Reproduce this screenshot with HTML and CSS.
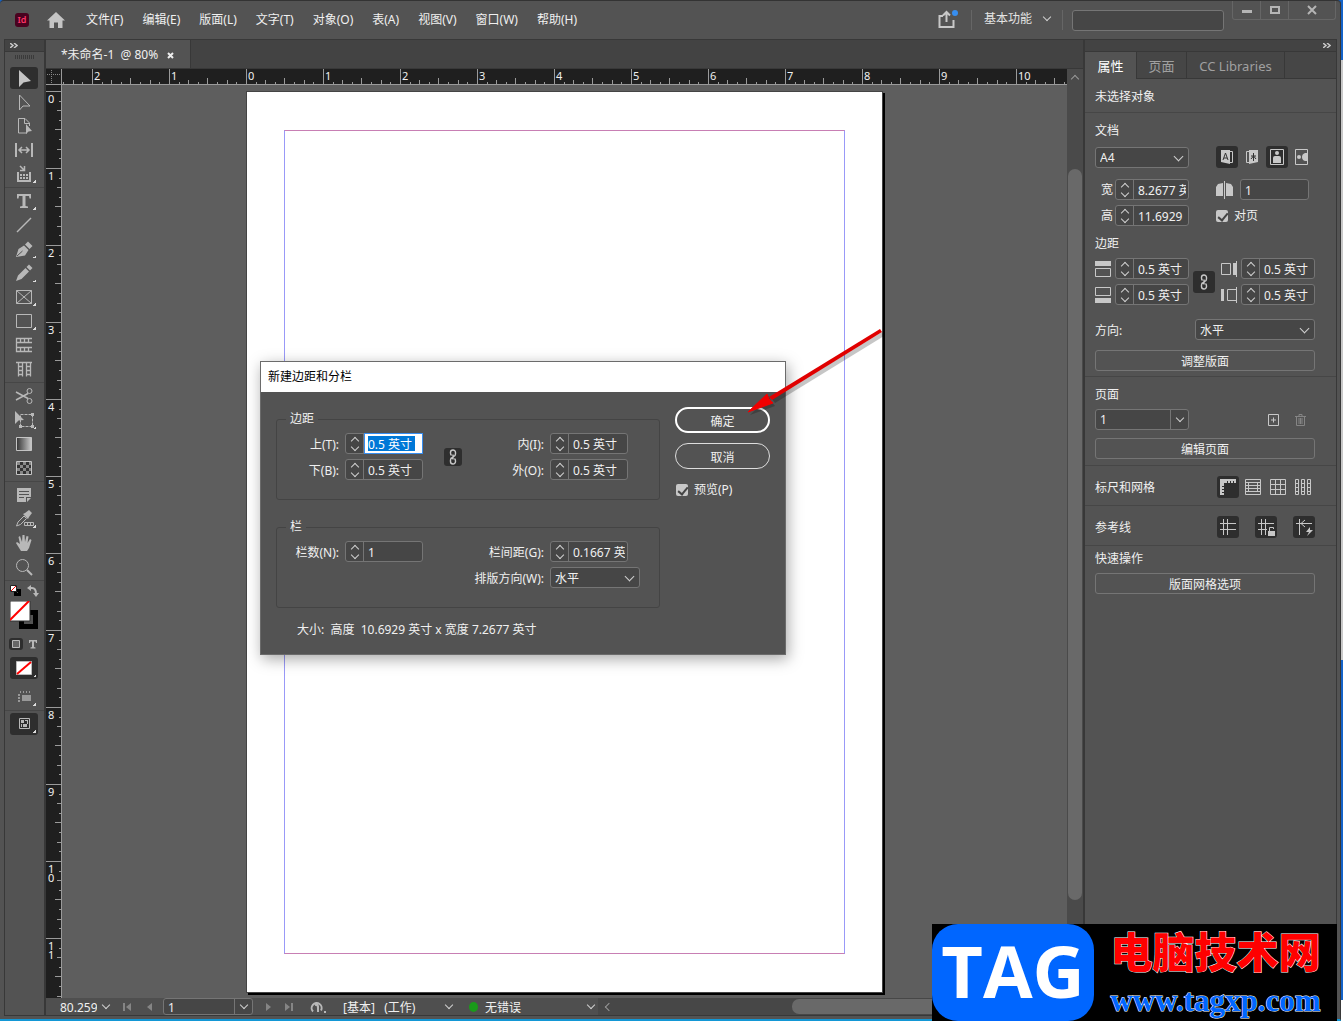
FILE: index.html
```html
<!DOCTYPE html>
<html lang="zh-CN">
<head>
<meta charset="utf-8">
<title>未命名-1</title>
<link rel="stylesheet" href="styles.css">
</head>
<body>
<div class="app">
  <header class="topbar">
    <span class="logo">Id</span>
    <button class="plain home" aria-label="主页"><svg width="18" height="16" viewBox="0 0 18 16"><path d="M9 0 18 8.500H15.500V16H11V10.500H7V16H2.500V8.500H0Z" fill="#c4c4c4"/></svg></button>
    <nav class="menu">
      <a href="#">文件(F)</a><a href="#">编辑(E)</a><a href="#">版面(L)</a><a href="#">文字(T)</a><a href="#">对象(O)</a><a href="#">表(A)</a><a href="#">视图(V)</a><a href="#">窗口(W)</a><a href="#">帮助(H)</a>
    </nav>
    <div class="top-right">
      <button class="plain" aria-label="共享"><svg width="22" height="20" viewBox="0 0 22 20"><path d="M6 6H2.500V17H16.500V10M9.500 12V3M6 5.500 9.500 2 13 5.500" fill="none" stroke="#c8c8c8" stroke-width="2"/><circle cx="18" cy="3" r="3" fill="#378ef0"/></svg></button>
      <i class="vsep"></i>
      <button class="plain workspace">基本功能<i class="chev"></i></button>
      <i class="vsep"></i>
      <input class="search" type="text" aria-label="搜索">
    </div>
    <div class="winbtns">
      <button aria-label="最小化"><svg width="10" height="10"><path d="M0 5H10V8H0z" fill="#b5b5b5"/></svg></button>
      <button aria-label="最大化"><svg width="10" height="10"><path d="M1 2H9V8H1z" fill="none" stroke="#b5b5b5" stroke-width="2"/></svg></button>
      <button class="close" aria-label="关闭"><svg width="10" height="10"><path d="M1 1 9 9M9 1 1 9" stroke="#b5b5b5" stroke-width="2"/></svg></button>
    </div>
  </header>

  <div class="workarea">
    <aside class="tools">
      <div class="strip"><svg width="8" height="5"><path d="M0 0 3 2.500 0 5M4 0 7 2.500 4 5" fill="none" stroke="#c8c8c8" stroke-width="1.500"/></svg></div>
      <div class="grip"></div>
      <button class="tool on" aria-label="选择"><svg viewBox="0 0 28 24"><path d="M9 4V21L13.500 16.500 21 15Z" fill="#c4c4c4"/></svg></button>
      <button class="tool" aria-label="直接选择"><svg viewBox="0 0 28 24"><path d="M9.500 5V20L13 16H20Z" class="ln"/></svg></button>
      <button class="tool" aria-label="页面工具"><svg viewBox="0 0 28 24"><path d="M17 19H8.500V4.500H15L19.500 9V12M14.500 4.500V9.500H19" class="ln"/><path d="M16 10V20L18.500 17.500 22 17Z" class="fl"/></svg></button>
      <button class="tool" aria-label="间隙"><svg viewBox="0 0 28 24"><path d="M6 5V19M22 5V19" class="ln" stroke-width="2"/><path d="M9 12H19M12 9 9 12 12 15M16 9 19 12 16 15" class="ln" stroke-width="1.500"/></svg></button>
      <button class="tool more" aria-label="内容收集"><svg viewBox="0 0 28 24"><path d="M8 10V19H20V10" class="ln" stroke-width="2"/><path d="M10 12h2v2h-2zM13 12h2v2h-2zM16 12h2v2h-2zM10 15h2v2h-2zM13 15h2v2h-2zM16 15h2v2h-2z" class="fl"/><path d="M10 4 14 8M14.500 4V8.500H10" class="ln" stroke-width="1.500"/></svg></button>
      <hr>
      <button class="tool more" aria-label="文字"><svg viewBox="0 0 28 24"><path d="M7 5H21V9.500H19.500L19 7H15.500V17L18 17.500V19H10V17.500L12.500 17V7H9L8.500 9.500H7Z" class="fl"/></svg></button>
      <button class="tool" aria-label="直线"><svg viewBox="0 0 28 24"><path d="M7 19 21 5" class="ln" stroke-width="1.500"/></svg></button>
      <button class="tool more" aria-label="钢笔"><svg viewBox="0 0 28 24"><path d="M6 20 8.500 12 14 8.500 18.500 13 15 18.500ZM15 7.500 18 4.500 22.500 9 19.500 12Z" class="fl"/><path d="M7 19 12.500 14" stroke="#535353"/></svg></button>
      <button class="tool more" aria-label="铅笔"><svg viewBox="0 0 28 24"><path d="M6 20 8 14.500 15.500 7 19 10.500 11.500 18ZM16.500 6 19 3.500 22.500 7 20 9.500Z" class="fl"/></svg></button>
      <button class="tool more" aria-label="矩形框架"><svg viewBox="0 0 28 24"><path d="M6.500 5.500H21.500V18.500H6.500ZM6.500 5.500 21.500 18.500M21.500 5.500 6.500 18.500" class="ln"/></svg></button>
      <button class="tool more" aria-label="矩形"><svg viewBox="0 0 28 24"><path d="M6.500 5.500H21.500V18.500H6.500Z" class="ln"/></svg></button>
      <button class="tool" aria-label="水平网格"><svg viewBox="0 0 28 24"><path d="M22 5.500H6.500V9.500H22M22 14.500H6.500V18.500H22M10.500 5V10M14.500 5V10M18.500 5V10M10.500 14V19M14.500 14V19M18.500 14V19M6.500 9V15" class="ln" stroke-width="1.300"/></svg></button>
      <button class="tool" aria-label="垂直网格"><svg viewBox="0 0 28 24"><path d="M6 5.500H22M8.500 5V19.500M12.500 5V19.500M16.500 5V19.500M20.500 5V19.500M8 9.500H12M8 13.500H12M8 17.500H12M17 9.500H21M17 13.500H21M17 17.500H21" class="ln" stroke-width="1.300"/></svg></button>
      <hr>
      <button class="tool" aria-label="剪刀"><svg viewBox="0 0 28 24"><path d="M6 8 18 14.500M6 16 18 9.500" class="ln" stroke-width="1.500"/><circle cx="19.500" cy="7" r="2.500" class="ln"/><circle cx="19.500" cy="17" r="2.500" class="ln"/></svg></button>
      <button class="tool more" aria-label="自由变换"><svg viewBox="0 0 28 24"><path d="M5 3V16L8.500 12.500 14 12Z" class="fl"/><path d="M10.500 6.500H22.500V18.500H10.500Z" class="ln" stroke-dasharray="3 1"/><path d="M9 17h3v3h-3zM21 17h3v3h-3zM21 5h3v3h-3z" class="fl"/></svg></button>
      <button class="tool" aria-label="渐变色板"><svg viewBox="0 0 28 24"><defs><linearGradient id="grad"><stop stop-color="#333"/><stop offset="1" stop-color="#ccc"/></linearGradient></defs><path d="M6.500 5.500H21.500V18.500H6.500Z" fill="url(#grad)" stroke="#c4c4c4"/></svg></button>
      <button class="tool" aria-label="渐变羽化"><svg viewBox="0 0 28 24"><path d="M6.500 5.500H21.500V18.500H6.500Z" fill="#333" stroke="#c4c4c4"/><path d="M7 6h3v3H7zM13 6h3v3h-3zM19 6h2v3h-2zM10 9h3v3h-3zM16 9h3v3h-3zM7 12h3v3H7zM13 12h3v3h-3zM19 12h2v3h-2zM10 15h3v3h-3zM16 15h3v3h-3z" fill="#888"/></svg></button>
      <hr>
      <button class="tool" aria-label="附注"><svg viewBox="0 0 28 24"><path d="M7 5H21V14H16V19H7ZM17 15H21L17 19Z" class="fl"/><path d="M9 8.500H19M9 11.500H19M9 14.500H14" stroke="#535353"/></svg></button>
      <button class="tool more" aria-label="颜色主题"><svg viewBox="0 0 28 24"><path d="M6.500 19 8 15 14 9 16.500 11.500 10.500 17.500Z" class="ln"/><path d="M13 7 15 6 19 3 22 6 19 10 18 12Z" class="fl"/><path d="M14.500 15.500H23.500V18.500H14.500ZM17.500 15V19M20.500 15V19" class="ln"/></svg></button>
      <button class="tool" aria-label="抓手"><svg viewBox="0 0 28 24"><path d="M11 20 6 12 7 11 10 13 8.500 6 10 5 12 11 12.500 4H14.500L15 11 16.500 5 18.500 5.500 17.500 12 20 8 21.500 9 19 17 17 20Z" class="fl"/></svg></button>
      <button class="tool" aria-label="缩放"><svg viewBox="0 0 28 24"><circle cx="12.500" cy="10.500" r="6" class="ln"/><path d="M17 15 22 20" class="ln" stroke-width="2"/></svg></button>
      <hr>
      <div class="pair">
        <button class="plain" aria-label="默认填色和描边"><svg width="14" height="14"><path d="M6.500 6.500H10.500V10.500H6.500Z" fill="none" stroke="#000" stroke-width="3"/><path d="M1.500 1.500H7.500V7.500H1.500Z" fill="#fff" stroke="#222"/><path d="M2 7 7 2" stroke="red"/></svg></button>
        <button class="plain" aria-label="互换填色和描边"><svg width="12" height="12"><path d="M3 3H5Q9 3 9 9" fill="none" stroke="#b8b8b8" stroke-width="2"/><path d="M0 3 4 0V6ZM6 8H12L9 12Z" class="fl"/></svg></button>
      </div>
      <button class="plain swatch" aria-label="填色"><svg width="28" height="30"><path d="M9 9H28V28H9Z" fill="#000"/><path d="M14 14H23V23H14Z" fill="#535353"/><path d="M0 0H20V20H0Z" fill="#fff" stroke="#333"/><path d="M0 19 19 0" stroke="red" stroke-width="2"/></svg></button>
      <div class="pair small">
        <button class="plain on" aria-label="格式针对容器"><svg width="14" height="12"><path d="M3.500 2.500H10.500V9.500H3.500Z" fill="#666" stroke="#b8b8b8"/></svg></button>
        <button class="plain" aria-label="格式针对文本"><svg width="10" height="12"><path d="M1 2H9V5H8L7.500 3.500H6V9L7.500 9.500V10.500H2.500V9.500L4 9V3.500H2.500L2 5H1Z" class="fl"/></svg></button>
      </div>
      <button class="tool on more" aria-label="应用无"><svg viewBox="0 0 28 24"><path d="M6.500 5.500H21.500V18.500H6.500Z" fill="#fff" stroke="#bbb"/><path d="M7 18 21 6" stroke="red" stroke-width="2"/></svg></button>
      <button class="tool more gap" aria-label="视图选项"><svg viewBox="0 0 28 24"><path d="M12 10h9v6h-9zM8 9h2v2H8zM8 12h2v2H8zM8 15h2v2H8zM10 6h1v2h-1zM13 6h1v2h-1zM16 6h1v2h-1zM19 6h1v2h-1z" fill="#999"/></svg></button>
      <hr>
      <button class="tool on more" aria-label="屏幕模式"><svg viewBox="0 0 28 24"><path d="M9.500 6.500H19.500V16.500H9.500Z" class="ln"/><path d="M11 8h3v3h-3zM15 8h3v1h-3zM17 9h1v3h-1zM13 12h4v3h-4zM11 12h1v3h-1z" class="fl"/></svg></button>
    </aside>

    <main class="doc">
      <div class="tabs"><div class="doctab"><span>*未命名-1&nbsp; @ 80%</span><button class="plain" aria-label="关闭文档"><svg width="7" height="7"><path d="M1 1 6 6M6 1 1 6" stroke="#eee" stroke-width="2"/></svg></button></div></div>
      <div class="view">
        <div class="corner"></div>
        <svg class="ruler-h">
          <defs><pattern id="th" x="30" y="0" width="77" height="16" patternUnits="userSpaceOnUse"><path d="M0.500 0V16M10.500 13V16M19.500 11V16M29.500 13V16M38.500 9V16M48.500 13V16M58.500 11V16M67.500 13V16" stroke="#9a9a9a"/></pattern></defs>
          <rect width="100%" height="100%" fill="url(#th)"/>
          <g class="num"><text x="32" y="11">2</text><text x="109" y="11">1</text><text x="186" y="11">0</text><text x="263" y="11">1</text><text x="340" y="11">2</text><text x="417" y="11">3</text><text x="494" y="11">4</text><text x="571" y="11">5</text><text x="648" y="11">6</text><text x="725" y="11">7</text><text x="802" y="11">8</text><text x="879" y="11">9</text><text x="956" y="11">10</text></g>
        </svg>
        <svg class="ruler-v">
          <defs><pattern id="tv" x="0" y="6" width="16" height="77" patternUnits="userSpaceOnUse"><path d="M0 0.500H16M13 10.500H16M11 19.500H16M13 29.500H16M9 38.500H16M13 48.500H16M11 58.500H16M13 67.500H16" stroke="#9a9a9a"/></pattern></defs>
          <rect width="100%" height="100%" fill="url(#tv)"/>
          <g class="num"><text x="2" y="18">0</text><text x="2" y="95">1</text><text x="2" y="172">2</text><text x="2" y="249">3</text><text x="2" y="326">4</text><text x="2" y="403">5</text><text x="2" y="480">6</text><text x="2" y="557">7</text><text x="2" y="634">8</text><text x="2" y="711">9</text><text x="2 2" y="788 797">10</text><text x="2 2" y="865 874">11</text></g>
        </svg>
        <div class="canvas"><div class="page"><div class="margins"></div></div></div>
        <div class="vscroll"><i class="chev up"></i><div class="thumb"></div></div>
      </div>
      <footer class="status">
        <input class="zoomval" type="text" value="80.259" aria-label="缩放级别"><i class="chev"></i>
        <button class="plain" aria-label="第一页"><svg width="8" height="8"><path d="M0 0H2V8H0ZM8 0V8L3 4Z" fill="#858585"/></svg></button>
        <button class="plain" aria-label="上一页"><svg width="5" height="8"><path d="M5 0V8L0 4Z" fill="#858585"/></svg></button>
        <div class="combo pageno"><input type="text" value="1" aria-label="页码"><button aria-label="选择页面"><i class="chev"></i></button></div>
        <button class="plain" aria-label="下一页"><svg width="5" height="8"><path d="M0 0V8L5 4Z" fill="#858585"/></svg></button>
        <button class="plain" aria-label="最后一页"><svg width="8" height="8"><path d="M6 0H8V8H6ZM0 0V8L5 4Z" fill="#858585"/></svg></button>
        <button class="plain open" aria-label="打开"><svg width="18" height="14"><path d="M4 11.500A5 5 0 1 1 12 10.500" fill="none" stroke="#b8b8b8" stroke-width="2"/><path d="M6 4Q9 2 10 6V12H8V8Q8 5 6 6ZM15 11h2v2h-2z" class="fl"/></svg></button>
        <span class="profile">[基本]&nbsp;&nbsp; (工作)</span><i class="chev"></i>
        <i class="dot"></i><span class="noerr">无错误</span><i class="chev"></i>
        <div class="hscroll"><i class="chev left"></i><div class="thumb"></div></div>
      </footer>
    </main>

    <aside class="panel">
      <div class="strip end"><svg width="8" height="5"><path d="M0 0 3 2.500 0 5M4 0 7 2.500 4 5" fill="none" stroke="#c8c8c8" stroke-width="1.500"/></svg></div>
      <div class="ptabs"><button class="active">属性</button><button>页面</button><button class="wide">CC Libraries</button><span></span></div>
      <section class="none">未选择对象</section>
      <section class="docsec">
        <h2>文档</h2>
        <div class="two">
          <div class="select"><select aria-label="页面大小"><option>A4</option></select></div>
          <div class="icons">
            <button class="ib on" aria-label="从左到右"><svg width="14" height="16"><path d="M9.500 2.500H12.500V13.500H8" fill="none" stroke="#c8c8c8"/><path d="M1 1H10V15L1 13Z" fill="#c8c8c8"/><path d="M3 11 5.500 4 8 11M4 9H7" fill="none" stroke="#333"/></svg></button>
            <button class="ib" aria-label="从右到左"><svg width="14" height="16"><path d="M4.500 2.500H1.500V13.500H6" fill="none" stroke="#c8c8c8"/><path d="M4 1H13V13L4 15Z" fill="#c8c8c8"/><path d="M8.500 4V12M6 7H11M8.500 7 6 10M8.500 7 11 10" stroke="#333"/></svg></button>
            <button class="ib on" aria-label="纵向"><svg width="14" height="16"><path d="M.5.500H13.500V15.500H.500Z" fill="none" stroke="#c8c8c8"/><circle cx="7" cy="4" r="2" fill="#c8c8c8"/><path d="M3 14V9Q3 7 5 7H9Q11 7 11 9V14Z" fill="#c8c8c8"/></svg></button>
            <button class="ib" aria-label="横向"><svg width="14" height="16"><path d="M.5.500H12.500V15.500H.500Z" fill="none" stroke="#c8c8c8"/><circle cx="4" cy="8" r="2" fill="#c8c8c8"/><path d="M13 4H10Q7 5 7 8T10 12H13Z" fill="#c8c8c8"/></svg></button>
          </div>
        </div>
        <div class="two sp">
          <div class="lab"><label for="pw">宽</label><div class="spin"><button aria-label="调整宽"></button><input id="pw" type="text" value="8.2677 英寸"></div></div>
          <div class="pages"><svg width="18" height="18"><path d="M8.500 0V18" stroke="#c8c8c8"/><path d="M0 6 2 3 7 2V15H0ZM10 2 15 3 17 6V15H10Z" fill="#c8c8c8"/></svg><input class="box" type="text" value="1" aria-label="页数"></div>
        </div>
        <div class="two tight">
          <div class="lab"><label for="ph">高</label><div class="spin"><button aria-label="调整高"></button><input id="ph" type="text" value="11.6929"></div></div>
          <label class="check"><input type="checkbox" checked>对页</label>
        </div>
        <h2 class="mh">边距</h2>
        <div class="mgrid">
          <svg width="17" height="16"><path d="M1 0H17V5H1Z" fill="#c8c8c8"/><path d="M1.500 7.500H16.500V15.500H1.500Z" fill="none" stroke="#c8c8c8"/></svg>
          <div class="spin"><button aria-label="调整上"></button><input type="text" value="0.5 英寸" aria-label="上"></div>
          <button class="ib on link" aria-label="统一设置"><svg width="8" height="16" viewBox="0 0 8 16"><path d="M2.500 6.500Q1.500 5.500 1.500 4V3.500A2.500 2.500 0 0 1 6.500 3.500V5Q6.500 7 4.500 7.500M5.500 9.500Q6.500 10.500 6.500 12V12.500A2.500 2.500 0 0 1 1.500 12.500V11Q1.500 9 3.500 8.500M4 5.500V10.500" fill="none" stroke="#c8c8c8" stroke-width="1.400"/></svg></button>
          <svg width="17" height="16"><path d="M1.500 2.500H10.500V13.500H1.500Z" fill="none" stroke="#c8c8c8"/><path d="M13 2H16V14H13ZM16 0H17V16H16Z" fill="#c8c8c8"/></svg>
          <div class="spin"><button aria-label="调整内"></button><input type="text" value="0.5 英寸" aria-label="内"></div>
          <svg width="17" height="16"><path d="M1 11H17V16H1Z" fill="#c8c8c8"/><path d="M1.500.500H16.500V8.500H1.500Z" fill="none" stroke="#c8c8c8"/></svg>
          <div class="spin"><button aria-label="调整下"></button><input type="text" value="0.5 英寸" aria-label="下"></div>
          <svg width="17" height="16"><path d="M1 2H4V14H1Z" fill="#c8c8c8"/><path d="M7.500 2.500H16.500V13.500H7.500ZM16.500 0V16" fill="none" stroke="#c8c8c8"/></svg>
          <div class="spin"><button aria-label="调整外"></button><input type="text" value="0.5 英寸" aria-label="外"></div>
        </div>
        <div class="dir"><label for="dir">方向:</label><div class="select"><select id="dir"><option>水平</option></select></div></div>
        <button class="bar">调整版面</button>
      </section>
      <section class="pagesec">
        <h2>页面</h2>
        <div class="prow">
          <div class="combo"><input type="text" value="1" aria-label="当前页"><button aria-label="选择页面"><i class="chev"></i></button></div>
          <div class="picons"><button class="plain" aria-label="新建页面"><svg width="11" height="12"><path d="M.5.500H10.500V11.500H.500ZM3 6H8M5.500 3.500V8.500" fill="none" stroke="#c8c8c8"/></svg></button>
          <button class="plain" aria-label="删除页面"><svg width="11" height="12"><path d="M0 2.500H11M4 2V.500H7V2M1.500 3V11.500H9.500V3M4 4V10M5.500 4V10M7 4V10" fill="none" stroke="#858585"/></svg></button></div>
        </div>
        <button class="bar">编辑页面</button>
      </section>
      <section class="line">
        <span>标尺和网格</span>
        <div class="icons four">
          <button class="ib on" aria-label="标尺"><svg width="16" height="16"><path d="M0 0H16V4H14V2H13V4H11V2H10V4H8V2H7V4H4V7H2V8H4V10H2V11H4V13H2V14H4V16H0Z" fill="#c8c8c8"/></svg></button>
          <button class="ib" aria-label="基线网格"><svg width="16" height="16"><path d="M.5.500H15.500V15.500H.500ZM0 3.500H16M0 6.500H16M0 9.500H16M0 12.500H16M3.500 3V13M12.500 3V13" fill="none" stroke="#c8c8c8"/></svg></button>
          <button class="ib" aria-label="文档网格"><svg width="16" height="16"><path d="M.5.500H15.500V15.500H.500ZM0 5.500H16M0 10.500H16M5.500 0V16M10.500 0V16" fill="none" stroke="#c8c8c8"/></svg></button>
          <button class="ib" aria-label="版面网格"><svg width="16" height="16"><path d="M.5.500H3.500V15.500H.500ZM6.500.500H9.500V15.500H6.500ZM12.500.500H15.500V15.500H12.500ZM1 4.500H3M1 8.500H3M1 12.500H3M7 4.500H9M7 8.500H9M7 12.500H9M13 4.500H15M13 8.500H15M13 12.500H15" fill="none" stroke="#c8c8c8"/></svg></button>
        </div>
      </section>
      <section class="line">
        <span>参考线</span>
        <div class="icons three">
          <button class="ib on" aria-label="显示参考线"><svg width="16" height="16"><path d="M0 4.500H16M0 10.500H16M3.500 0V16M7.500 0V16" stroke="#c8c8c8"/></svg></button>
          <button class="ib on" aria-label="锁定参考线"><svg width="17" height="17"><path d="M0 4.500H16M0 10.500H9M3.500 0V16M7.500 0V16M11.500 12V8.500H15.500V10" fill="none" stroke="#c8c8c8"/><path d="M10 12H17V17H10Z" fill="#c8c8c8"/></svg></button>
          <button class="ib on" aria-label="智能参考线"><svg width="17" height="17"><path d="M0 4.500H16M3.500 0V16M9 1 5 4.500 9 8" fill="none" stroke="#c8c8c8"/><path d="M14 8 10 13H13L11 17 17 11H14Z" fill="#c8c8c8"/></svg></button>
        </div>
      </section>
      <section class="quick"><h2>快速操作</h2><button class="bar">版面网格选项</button></section>
    </aside>
  </div>

  <div class="dialog" role="dialog" aria-labelledby="dt">
    <div class="dtitle" id="dt">新建边距和分栏</div>
    <div class="dbody">
      <div class="dleft">
        <fieldset>
          <legend>边距</legend>
          <label for="mt">上(T):</label><div class="spin focus"><button aria-label="调整上边距"></button><input id="mt" type="text" value="0.5 英寸"></div>
          <button class="ib on dlink" aria-label="统一设置"><svg width="8" height="16" viewBox="0 0 8 16"><path d="M2.500 6.500Q1.500 5.500 1.500 4V3.500A2.500 2.500 0 0 1 6.500 3.500V5Q6.500 7 4.500 7.500M5.500 9.500Q6.500 10.500 6.500 12V12.500A2.500 2.500 0 0 1 1.500 12.500V11Q1.500 9 3.500 8.500M4 5.500V10.500" fill="none" stroke="#c8c8c8" stroke-width="1.400"/></svg></button>
          <label class="c4" for="mi">内(I):</label><div class="spin"><button aria-label="调整内边距"></button><input id="mi" type="text" value="0.5 英寸"></div>
          <label for="mb">下(B):</label><div class="spin"><button aria-label="调整下边距"></button><input id="mb" type="text" value="0.5 英寸"></div>
          <label class="c4" for="mo">外(O):</label><div class="spin"><button aria-label="调整外边距"></button><input id="mo" type="text" value="0.5 英寸"></div>
        </fieldset>
        <fieldset>
          <legend>栏</legend>
          <label for="cn">栏数(N):</label><div class="spin"><button aria-label="调整栏数"></button><input id="cn" type="text" value="1"></div>
          <label class="c4" for="cg">栏间距(G):</label><div class="spin"><button aria-label="调整栏间距"></button><input id="cg" type="text" value="0.1667 英寸"></div>
          <label class="c4" for="wd">排版方向(W):</label><div class="select"><select id="wd"><option>水平</option></select></div>
        </fieldset>
        <p>大小:&nbsp; 高度&nbsp; 10.6929 英寸 x 宽度 7.2677 英寸</p>
      </div>
      <div class="dright">
        <button class="pill ok">确定</button>
        <button class="pill">取消</button>
        <label class="check"><input type="checkbox" checked>预览(P)</label>
      </div>
    </div>
  </div>

  <svg class="arrow" width="160" height="110" viewBox="0 0 160 110">
    <g fill="#000" opacity=".22" transform="translate(2 3)"><path d="M140 9 142 13 33 80 30 76Z"/><path d="M8 92 27 73 29 78 33 83Z"/></g>
    <path d="M140 9 142 12 32 80 29 77Z" fill="#e00000"/><path d="M8 92 27 74 29 79 33 83Z" fill="#f00000" stroke="#f00000"/>
  </svg>
</div>

<div class="mark">
  <div class="tag">TAG</div>
  <div class="site"><b>电脑技术网</b><a href="#">www.tagxp.com</a></div>
</div>
</body>
</html>
```
FILE: styles.css
```css
* { box-sizing: border-box; }
body {
  position: relative;
  margin: 0;
  padding-right: 2px;
  background: linear-gradient(#1463c8 0 60px, #c9c9c9 60px 660px, #1463c8 660px 1000px, #fff 1000px);
}
body, button, input, select {
  font: 12px/16px "Noto Sans", "Noto Sans CJK SC", sans-serif;
  color: #f0f0f0;
}
button, input, select { margin: 0; padding: 0; border: 0; background: none; border-radius: 0; min-width: 0; outline: 0; }
a { color: inherit; text-decoration: none; }
svg { display: block; flex: none; }
h2, p { margin: 0; font-size: 12px; font-weight: 400; line-height: 16px; }
.ln { fill: none; stroke: #b8b8b8; }
.fl { fill: #b8b8b8; }

.app {
  position: relative;
  display: flex;
  flex-direction: column;
  height: 100vh;
  overflow: hidden;
  background: #535353;
  border-top: 1px solid #333;
  border-right: 1px solid #383838;
  border-bottom: 2px solid #1397d5;
  border-radius: 4px 4px 0 0;
}
.plain { display: flex; align-items: center; justify-content: center; }
.chev { width: 6px; height: 6px; border: solid #d0d0d0; border-width: 0 1px 1px 0; transform: translateY(-2px) rotate(45deg); flex: none; }
.chev.up { border-color: #999; transform: translateY(2px) rotate(225deg); }
.chev.left { border-color: #999; transform: rotate(135deg); }

/* Menu bar */
.topbar { display: flex; align-items: center; height: 38px; padding-left: 15px; flex: none; }
.logo { width: 14px; height: 14px; border-radius: 3px; background: #49021f; color: #ff3366; font-size: 9px; line-height: 13px; font-weight: 600; text-align: center; }
.home { margin: 0 21px 0 18px; }
.menu { display: flex; gap: 19px; flex: 1; white-space: nowrap; }
.top-right { display: flex; align-items: center; gap: 12px; }
.vsep { width: 1px; height: 20px; background: #666; }
.workspace { gap: 12px; color: #e4e4e4; padding-bottom: 3px; }
.search { width: 152px; height: 21px; border: 1px solid #757575; border-radius: 3px; background: #464646; margin-left: -3px; }
.winbtns { display: flex; align-self: flex-start; margin: 0 4px 0 8px; border: 1px solid #666; border-top: 0; border-radius: 0 0 3px 3px; }
.winbtns button { display: grid; place-items: center; width: 28px; height: 18px; border-right: 1px solid #666; }
.winbtns .close { width: 46px; border: 0; }

.workarea { display: flex; flex: 1; min-height: 0; margin: 0 3px 3px 4px; border: solid #383838; border-width: 1px 0; }
.strip { display: flex; align-items: center; height: 12px; padding-left: 5px; background: #434343; border-bottom: 1px solid #383838; }
.strip.end { justify-content: flex-end; padding-right: 5px; }

/* Toolbox */
.tools { width: 42px; flex: none; border: solid #383838; border-width: 0 2px 0 1px; }
.grip { width: 20px; height: 4px; margin: 3px auto 7px; background: repeating-linear-gradient(90deg, #3a3a3a 0 1px, transparent 1px 2px); }
.tool { position: relative; display: block; width: 28px; height: 24px; margin-left: 5px; }
.tool svg { position: relative; width: 28px; height: 24px; }
.tool.on::before { content: ""; position: absolute; inset: 1px 0; border-radius: 3px; background: #2e2e2e; }
.tool.more::after { content: ""; position: absolute; right: 2px; bottom: 3px; border: solid transparent; border-width: 3px 0 0 3px; width: 0; height: 0; background: linear-gradient(135deg, transparent 50%, #ddd 50%) border-box; }
.tools hr { height: 1px; margin: 1px 0; border: 0; background: #464646; }
.pair { display: flex; justify-content: space-between; height: 18px; padding: 0 5px 0 4px; }
.swatch { margin-left: 5px; height: 32px; }
.pair.small { height: 24px; align-items: center; padding-right: 6px; }
.pair .on { background: #2e2e2e; border-radius: 3px; }
.tool.gap { margin-top: 5px; }

/* Document window */
.doc { flex: 1; min-width: 0; display: flex; flex-direction: column; }
.tabs { height: 29px; flex: none; display: flex; background: #434343; border-bottom: 1px solid #383838; }
.doctab { display: flex; align-items: center; gap: 9px; width: 145px; padding: 2px 0 0 15px; background: #535353; border-right: 1px solid #383838; white-space: nowrap; }
.view { flex: 1; min-height: 0; display: grid; grid-template: 16px 1fr / 16px 1fr 16px; }
.corner { background: repeating-linear-gradient(#1f1f1f 0 1px, transparent 1px 2px) 5px 0 / 1px 100% no-repeat, repeating-linear-gradient(90deg, #1f1f1f 0 1px, transparent 1px 2px) 0 5px / 100% 1px no-repeat, linear-gradient(#888, #888) 5px 0 / 1px 100% no-repeat, linear-gradient(#888, #888) 0 5px / 100% 1px no-repeat, #1f1f1f; border: solid #9a9a9a; border-width: 0 1px 1px 0; }
.ruler-h, .ruler-v { width: 100%; height: 100%; background: #1f1f1f; }
.ruler-h { border-bottom: 1px solid #9a9a9a; }
.ruler-v { grid-area: 2 / 1; border-right: 1px solid #9a9a9a; }
.num { fill: #f0f0f0; font-size: 11px; }
.canvas { grid-area: 2 / 2; position: relative; overflow: hidden; background: #5e5e5e; }
.page { position: absolute; left: 184px; top: 6px; width: 637px; height: 902px; padding: 38px 37px; background: #fff; border: 1px solid #444; box-shadow: 2px 2px #000; }
.margins { height: 824px; border: 1px solid; border-color: #c87fb4 #9999f8; }
.vscroll { grid-area: 1 / 3 / 3 / 4; background: #4a4a4a; padding: 5px 1px 98px; display: flex; flex-direction: column; align-items: center; }
.vscroll .thumb { flex: 1; width: 14px; margin-top: 89px; border-radius: 7px; background: #696969; }
.status { display: flex; align-items: center; height: 17px; flex: none; padding-left: 14px; background: #4f4f4f; white-space: nowrap; }
.status input, .status span { padding-top: 2px; }
.zoomval { width: 37px; margin-right: 6px; }
.status .chev + .plain { margin: 0 16px 0 14px; }
.combo { display: flex; width: 94px; height: 21px; border: 1px solid #757575; border-radius: 3px; background: #464646; }
.combo input { flex: 1; padding-left: 4px; }
.combo button { width: 18px; display: grid; place-items: center; border-left: 1px solid #757575; }
.combo.pageno { width: 90px; height: 17px; margin: 0 13px 0 11px; }
.pageno + .plain { margin-right: 14px; }
.open { margin: 0 16px; }
.profile { width: 103px; }
.dot { width: 9px; height: 10px; border-radius: 50%; background: #1a9a1a; margin: 0 7px 0 17px; }
.noerr { width: 103px; }
.hscroll { display: flex; align-items: center; flex: 1; height: 17px; margin-left: 4px; padding-left: 8px; background: #474747; }
.hscroll .thumb { flex: 1; height: 15px; margin-left: 180px; border-radius: 7px; background: #696969; }

/* Shared controls */
.spin { display: flex; height: 21px; border: 1px solid #757575; border-radius: 3px; background: #464646; }
.spin button { position: relative; width: 18px; flex: none; border-right: 1px solid #757575; }
.spin button::before, .spin button::after { content: ""; position: absolute; left: 6px; width: 5px; height: 5px; border: solid #d0d0d0; border-width: 1px 0 0 1px; transform: rotate(45deg); top: 4px; }
.spin button::after { top: 10px; transform: rotate(225deg); }
.spin input { flex: 1; width: 0; padding: 2px 0 0 4px; margin-right: 2px; }
.spin.focus input { margin: -1px -1px -1px 0; border: 1px solid #378ef0; padding-left: 3px; background: linear-gradient(#0078d7, #0078d7) 3px 2px / 47px 15px no-repeat, #fff; color: #fff; }
.select { position: relative; height: 21px; border: 1px solid #757575; border-radius: 3px; background: #464646; }
.select::after { content: ""; position: absolute; right: 6px; top: 5px; width: 6px; height: 6px; border: solid #d0d0d0; border-width: 0 1px 1px 0; transform: rotate(45deg); pointer-events: none; }
.select select { appearance: none; width: 100%; height: 19px; padding: 2px 0 0 4px; }
.ib { display: grid; place-items: center; width: 22px; height: 22px; border-radius: 3px; }
.ib.on { background: #2e2e2e; }
.bar { display: block; width: 100%; height: 21px; padding-top: 2px; border: 1px solid #757575; border-radius: 3px; }
.check { display: flex; align-items: center; gap: 6px; }
.check input { appearance: none; position: relative; width: 12px; height: 12px; border-radius: 2px; background: #c8c8c8; }
.check input::after { content: ""; position: absolute; left: 4px; top: 1px; width: 4px; height: 8px; border: solid #444; border-width: 0 2px 2px 0; transform: rotate(40deg); }

/* Properties panel */
.panel { width: 254px; flex: none; border: solid #383838; border-width: 0 1px 0 2px; }
.ptabs { display: flex; height: 27px; }
.ptabs button { width: 50px; background: #464646; border: solid #383838; border-width: 0 1px 1px 0; color: #a0a0a0; font-size: 13px; padding-top: 2px; }
.ptabs .wide { width: 98px; }
.ptabs .active { width: 52px; background: none; border-bottom: 0; color: #fff; padding-top: 0; }
.ptabs span { flex: 1; background: #464646; border-bottom: 1px solid #383838; }
.panel section { padding: 0 21px 0 10px; border-bottom: 1px solid #464646; }
.panel .none { height: 34px; padding-top: 10px; }
.docsec h2 { padding: 10px 0 7px; height: 33px; }
.two { display: grid; grid-template-columns: 94px 1fr; column-gap: 27px; align-items: center; height: 21px; }
.icons { display: grid; grid-template-columns: repeat(4, 22px); gap: 3px; }
.sp { margin-top: 12px; }
.tight { margin-top: 5px; }
.lab { display: grid; grid-template-columns: 14px 74px; justify-content: space-between; align-items: center; margin-left: 6px; }
.pages { display: flex; align-items: center; gap: 6px; }
.box { width: 69px; height: 21px; border: 1px solid #757575; border-radius: 3px; background: #464646; padding: 2px 0 0 4px; }
.docsec .mh { height: 32px; }
.mgrid { display: grid; grid-template-columns: 16px 74px 22px 18px 74px; gap: 5px 4px; align-items: center; }
.mgrid > svg { justify-self: end; }
.link { grid-area: 1 / 3 / 3 / 4; }
.dir { display: flex; align-items: center; justify-content: space-between; margin: 14px 0 10px; }
.dir label { padding-top: 2px; }
.dir .select { width: 120px; }
.docsec { height: 264px; }
.pagesec { height: 89px; }
.pagesec h2 { padding-top: 10px; height: 32px; }
.prow { display: flex; align-items: center; justify-content: space-between; margin-bottom: 8px; }
.picons { display: flex; gap: 16px; margin-right: 9px; }
.panel .line { display: flex; align-items: center; justify-content: space-between; height: 40px; padding-top: 3px; }
.line span { padding-top: 2px; }
.four { margin-right: 1px; }
.three { grid-template-columns: repeat(3, 22px); gap: 16px; }
.panel .quick { border: 0; padding-top: 5px; }
.quick h2 { margin-bottom: 6px; }

/* New margins and columns dialog */
.dialog { position: absolute; left: 260px; top: 360px; width: 526px; border: 1px solid #6b6b6b; background: #535353; box-shadow: 2px 4px 14px rgba(0, 0, 0, .35); }
.dtitle { height: 30px; padding: 7px; background: #fff; color: #000; }
.dbody { display: flex; gap: 15px; padding: 15px 15px 16px; }
.dleft { flex: 1; padding-top: 4px; }
fieldset { display: grid; grid-template-columns: 62px 78px 33px 76px 78px; grid-auto-rows: 21px; gap: 5px 6px; align-items: center; margin: 0 0 19px; padding: 6px 0 19px; border: 1px solid #444; border-radius: 3px; min-width: 0; white-space: nowrap; }
legend { height: 16px; margin-left: 9px; padding: 0 4px; }
fieldset label { text-align: right; grid-column: 1; padding-top: 2px; }
fieldset .c4 { grid-column: 4; }
.dlink { grid-area: 1 / 3 / 3 / 4; justify-self: end; width: 18px; height: 18px; }
fieldset .select { width: 90px; }
.dleft p { padding-left: 21px; margin-top: -5px; }
.dright { display: flex; flex-direction: column; gap: 10px; width: 95px; }
.pill { height: 26px; border: 1px solid #ddd; border-radius: 13px; padding-top: 3px; }
.pill.ok { border: 2px solid #fff; }
.dright .check { margin: 3px 0 0 1px; }

.arrow { position: absolute; left: 740px; top: 319px; pointer-events: none; }

/* Site mark */
.mark { position: absolute; right: 6px; bottom: 0; display: flex; width: 405px; height: 97px; background: #000; }
.tag { width: 162px; border-radius: 26px; background: #0066ff; color: #fff; font: 700 72px/92px "Open Sans", sans-serif; text-align: center; }
.site { flex: 1; display: flex; flex-direction: column; align-items: center; justify-content: space-between; padding: 2px 0 1px; }
.site b { font: 900 42px/48px "Noto Sans CJK SC", sans-serif; color: #f00; -webkit-text-stroke: 1px #fff; paint-order: stroke fill; }
.site a { font: 700 31px/38px "Liberation Serif", serif; color: #0066ff; -webkit-text-stroke: 1px #fff; paint-order: stroke fill; }
```
